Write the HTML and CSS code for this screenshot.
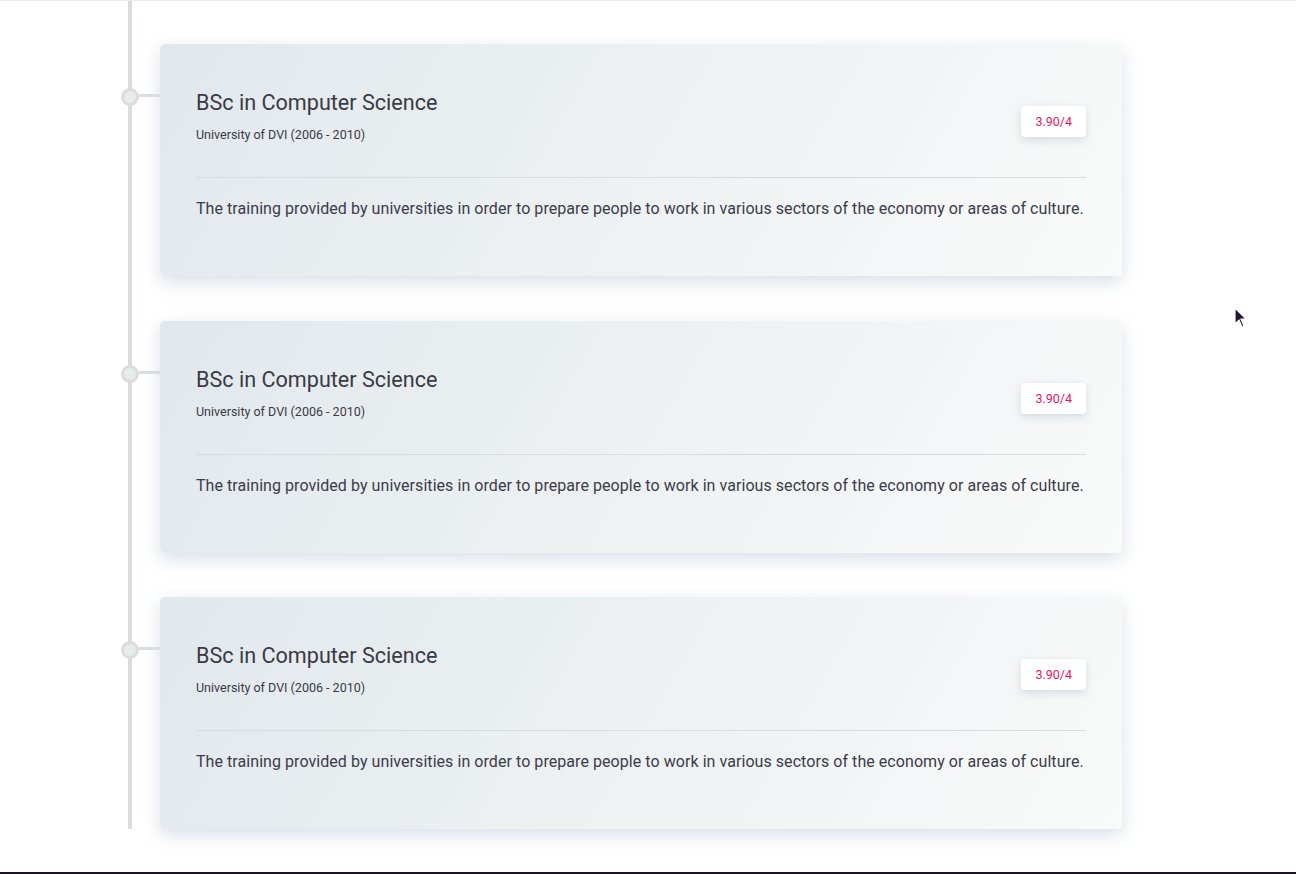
FILE: index.html
```html
<!DOCTYPE html>
<html>
<head>
    <title>Education</title>
    <link rel="stylesheet" href="styles.css">
</head>
<body>
    <div class="page">
        <div class="timeline">
            <div class="entry">
                <span class="marker"></span>
                <div class="card">
                    <div class="card-head">
                        <div>
                            <h3>BSc in Computer Science</h3>
                            <p class="school">University of DVI (2006 - 2010)</p>
                        </div>
                        <span class="grade">3.90/4</span>
                    </div>
                    <p class="desc">The training provided by universities in order to prepare people to work in various sectors of the economy or areas of culture.</p>
                </div>
            </div>
            <div class="entry">
                <span class="marker"></span>
                <div class="card">
                    <div class="card-head">
                        <div>
                            <h3>BSc in Computer Science</h3>
                            <p class="school">University of DVI (2006 - 2010)</p>
                        </div>
                        <span class="grade">3.90/4</span>
                    </div>
                    <p class="desc">The training provided by universities in order to prepare people to work in various sectors of the economy or areas of culture.</p>
                </div>
            </div>
            <div class="entry">
                <span class="marker"></span>
                <div class="card">
                    <div class="card-head">
                        <div>
                            <h3>BSc in Computer Science</h3>
                            <p class="school">University of DVI (2006 - 2010)</p>
                        </div>
                        <span class="grade">3.90/4</span>
                    </div>
                    <p class="desc">The training provided by universities in order to prepare people to work in various sectors of the economy or areas of culture.</p>
                </div>
            </div>
        </div>
    </div>
    <svg class="cursor" width="14" height="22" viewBox="0 0 14 22">
        <path d="M1 1 L1 17 L5 13 L8 20 L10 19 L7 12 L12 12 Z" fill="#1d1530" stroke="#fff" stroke-width="1.2"/>
    </svg>
</body>
</html>
```

FILE: styles.css
```css
html, body { margin: 0; padding: 0; }
body { font-family: Roboto, "Noto Sans", Arial, sans-serif; background: #fff; }
.page { height: 871px; border-top: 1px solid #eceeee; border-bottom: 2px solid #1b1523; box-sizing: content-box; }
.timeline { margin-left: 128px; width: 994px; border-left: 4px solid #dedbdf; padding: 43px 0 0 0; box-sizing: border-box; height: 828px; }
.entry { position: relative; margin-left: 28px; margin-bottom: 44.5px; }
.entry:last-child { margin-bottom: 0; }
.marker { position: absolute; left: -39px; top: 44px; width: 12px; height: 12px; border: 3px solid #dedbdf; border-radius: 50%; background: #e6ebec; }
.marker::after { content: ""; position: absolute; left: 15px; top: 3px; width: 21px; height: 3px; background: #dedbdf; }
.card { height: 232px; box-sizing: border-box; padding: 46px 36px 0 36px; border-radius: 5px; background: linear-gradient(120deg, #e1e8ec 0%, #edf1f2 50%, #f9fafa 100%); box-shadow: 0 6px 18px rgba(160, 176, 196, 0.4); }
.card-head { display: flex; justify-content: space-between; align-items: flex-start; padding-bottom: 33px; border-bottom: 1px solid #d8dcdf; }
h3 { margin: 0; font-size: 21.6px; font-weight: 400; line-height: 26px; color: #3a3a44; }
.school { margin: 10px 0 0; font-size: 12.5px; line-height: 18px; color: #3a3a44; }
.grade { margin-top: 16px; padding: 0 14px; height: 31px; line-height: 31px; font-size: 12.5px; color: #e8175d; background: #fff; border-radius: 4px; box-shadow: 0 3px 8px rgba(150, 166, 186, 0.35); }
.desc { margin: 19px 0 0; font-size: 16px; letter-spacing: 0.06px; line-height: 24px; color: #3c3b4a; white-space: nowrap; }
.cursor { position: absolute; left: 1234px; top: 307px; }
```
